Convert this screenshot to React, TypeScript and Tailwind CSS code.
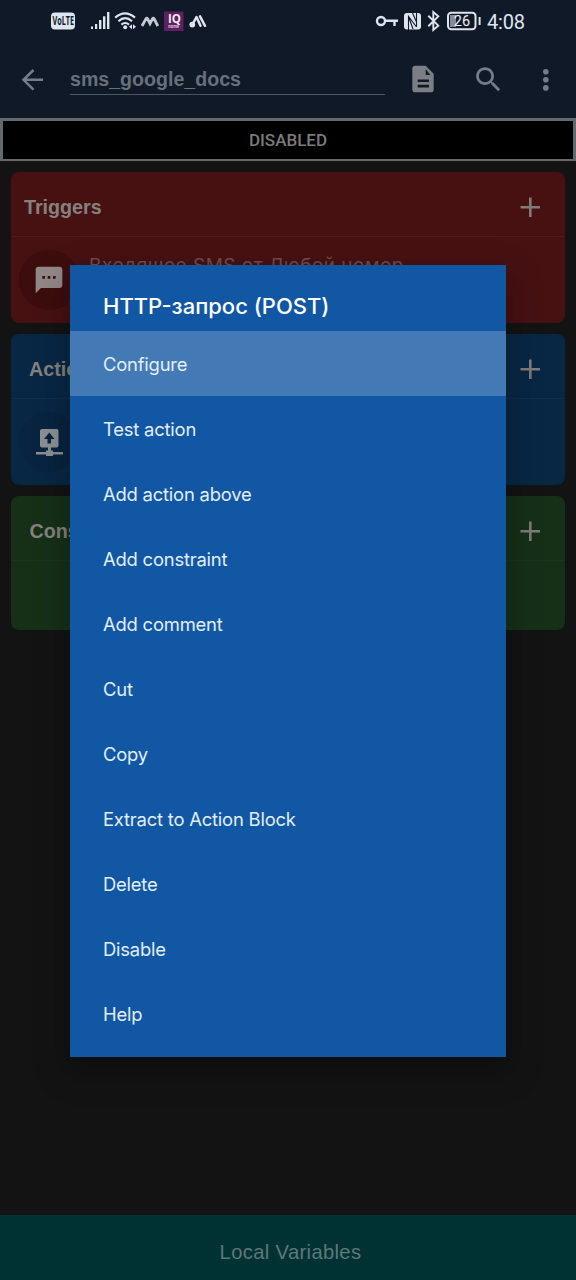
import React from "react";

const LATIN = "font-['Liberation_Sans',Arial,sans-serif]";
const MENU = "font-['Inter',sans-serif]";

function StatusBar() {
  return (
    <div className="flex h-[44px] shrink-0 items-start pt-[9px]">
      <svg className="ml-[48px] h-6 w-[172px] shrink-0" viewBox="48 9 172 24" fill="#dfe5ee">
        <rect x="51" y="12.5" width="24" height="17" rx="4" />
        <text x="52.5" y="25.3" fontFamily="Open Sans, sans-serif" fontSize="12" fontWeight="700" fill="#101928" textLength="21.5" lengthAdjust="spacingAndGlyphs">VoLTE</text>
        <rect x="91" y="26.5" width="2" height="2.5" />
        <rect x="95" y="24" width="2.2" height="5" />
        <rect x="99" y="20" width="2.4" height="9" />
        <rect x="103" y="16.300" width="2.4" height="12.700" />
        <rect x="107" y="12" width="2.4" height="17" />
        <g fill="none" stroke="#dfe5ee" strokeWidth="2.1" strokeLinecap="butt">
          <path d="M115.2 17.6q9.8-8.6 19.8 0" />
          <path d="M118.4 21.2q6.8-6 13.6 0" />
          <path d="M121.4 24.6q3.8-3.2 7.6 0" />
        </g>
        <circle cx="125.2" cy="27.2" r="2" />
        <path d="M132 24.2v5l-3-2.5zM133 24.2v5l3-2.5z" />
        <path d="M142 26l4-7.2q.8-1.2 1.6 0l2.4 4.8 2.5-4.8q.8-1.2 1.6 0l3.7 7.2" fill="none" stroke="#c3c8d1" strokeWidth="2.8" />
        <rect x="164" y="11.5" width="19.5" height="19.5" fill="#5d2160" />
        <text x="168" y="22.800" fontFamily="Open Sans, sans-serif" fontSize="11.500" fontWeight="700" fill="#f3e8f2">IQ</text>
        <text x="168.2" y="28.2" fontFamily="Inter, sans-serif" fontSize="4" fontWeight="700" fill="#e2c8df" textLength="11">home</text>
        <circle cx="192.3" cy="24.6" r="2.9" />
        <path d="M193.500 22.500l3-5.500 4 8.800M200 16.300l5 9.500" fill="none" stroke="#dfe5ee" strokeWidth="2.500" strokeLinejoin="round" strokeLinecap="round" />
      </svg>
      <svg className="ml-[154px] h-6 w-[110px] shrink-0" viewBox="374 9 110 24" fill="none" stroke="#dfe5ee">
        <circle cx="381" cy="21" r="4" strokeWidth="2.4" />
        <path d="M385 20.800h13M394.500 21v5" strokeWidth="2.4" />
        <rect x="404" y="13" width="17" height="16.500" rx="3" fill="#dfe5ee" stroke="none" />
        <path d="M408.500 30V16.500l8 10.500M416.500 12.500v14M408.500 16.500l4.500 12.500M412.500 13l4 9" stroke="#101928" strokeWidth="1.100" />
        <path d="M428.3 15.8l10 9.8-5 4.400V12l5 4.400-10 9.8" strokeWidth="1.900" />
        <rect x="448" y="12.8" width="27.5" height="16.4" rx="3.2" strokeWidth="2" />
        <rect x="450" y="15" width="6" height="12" fill="#858b96" stroke="none" />
        <path d="M479.6 17v8" strokeWidth="2" />
        <text x="453.8" y="26.200" fontFamily="Roboto, sans-serif" fontSize="14.500" fill="#edf1f7" stroke="none">26</text>
      </svg>
      <span className="ml-[3px] mt-px font-['Roboto',sans-serif] text-[20px] leading-6 tracking-[-0.2px] text-[#dfe5ee]">4:08</span>
    </div>
  );
}

function Toolbar() {
  return (
    <div className="flex h-[74px] shrink-0 items-start">
      <svg className="ml-[20px] mt-[24px] size-6" viewBox="0 0 24 24" fill="none" stroke="#777d87" strokeWidth="2.5">
        <path d="M23 11.800H3.600M13.500 2L3.500 11.800l10 9.900" />
      </svg>
      <div className={`${LATIN} ml-[26px] mt-[20px] h-[31px] w-[315px] border-b border-[#4c5562] text-[19.6px] leading-[30px] font-bold text-[#68707b]`}>
        sms_google_docs
      </div>
      <svg className="ml-[22px] mt-[19px] size-8" viewBox="0 0 24 24" fill="#7b7f84">
        <path fillRule="evenodd" d="M14 2H6c-1.100 0-2 .9-2 2v16c0 1.100.9 2 2 2h12c1.100 0 2-.9 2-2V8zM17.500 9H14V4.500zM8 12.300h8.500v2H8zm0 4h8.500v2H8z" />
      </svg>
      <svg className="ml-[33px] mt-[19px] size-[33px]" viewBox="0 0 24 24" fill="#777d87">
        <path d="M15.500 14h-.79l-.28-.27C15.410 12.590 16 11.110 16 9.500 16 5.910 13.090 3 9.500 3S3 5.910 3 9.500 5.910 16 9.500 16c1.610 0 3.090-.59 4.230-1.570l.27.28v.79l5 4.990L20.490 19zm-6 0C7.010 14 5 11.990 5 9.500S7.010 5 9.500 5 14 7.010 14 9.500 11.990 14 9.500 14z" />
      </svg>
      <svg className="ml-[24px] mt-[19px] size-8" viewBox="0 0 32 32" fill="#777d87">
        <circle cx="16.800" cy="8.800" r="2.800" /><circle cx="16.800" cy="16.800" r="2.800" /><circle cx="16.800" cy="24.900" r="2.800" />
      </svg>
    </div>
  );
}

function Plus() {
  return (
    <svg className="size-5" viewBox="0 0 20 20" stroke="#7f7b7b" strokeWidth="2.600">
      <path d="M10.300 .5v19.500M.5 10.300h19.500" />
    </svg>
  );
}

function Card({ title, box, line, head, children }: { title: string; box: string; line: string; head: string; children?: React.ReactNode }) {
  return (
    <section className={`flex shrink-0 flex-col rounded-[8px] ${box}`}>
      <header className={`flex h-[65px] items-center justify-between border-b pt-[6px] pr-[25px] ${line} ${head}`}>
        <h2 className={`${LATIN} text-[19.700px] leading-6 font-bold text-[#85817f]`}>{title}</h2>
        <Plus />
      </header>
      {children}
    </section>
  );
}

const actions = [
  "Configure", "Test action", "Add action above", "Add constraint", "Add comment",
  "Cut", "Copy", "Extract to Action Block", "Delete", "Disable", "Help",
];

function ActionDialog() {
  return (
    <div className={`${MENU} absolute top-[265px] left-[70px] flex h-[792px] w-[436px] flex-col bg-[#1257a4] shadow-[0_12px_30px_4px_rgba(0,0,0,0.250)]`}>
      <h1 className="flex h-[66px] shrink-0 items-center pt-[16px] pl-[33px] text-[22px] leading-7 font-medium text-white">HTTP-запрос (POST)</h1>
      <ul>
        {actions.map((label, i) => (
          <li key={label} className={`flex h-[65px] items-center pt-[3px] pl-[33px] text-[18.400px] tracking-[-0.200px] text-[#e1eefb] ${i === 0 ? "bg-[#437ab6]" : ""}`}>{label}</li>
        ))}
      </ul>
    </div>
  );
}

export default function App() {
  return (
    <div className="relative flex h-[1280px] w-[576px] flex-col overflow-hidden bg-[#131313]">
      <div className="flex shrink-0 flex-col bg-[#101928]">
        <StatusBar />
        <Toolbar />
      </div>
      <div className="flex h-[43px] shrink-0 items-center justify-center border-[3px] border-b-2 border-[#66696b] bg-black pt-[2px] font-['Roboto',sans-serif] text-[17px] font-medium text-[#7b7b7b]">DISABLED</div>
      <main className="flex grow flex-col gap-[11px] px-[11px] pt-[11px]">
        <Card title="Triggers" box="h-[151px] bg-[#471112]" line="border-[#501a1b]" head="pl-[13px]">
          <div className="flex items-start">
            <div className="mt-[13px] ml-[8px] flex size-[60px] shrink-0 items-center justify-center rounded-full bg-[#3d0d0d]">
              <svg className="size-[32px]" viewBox="0 0 24 24" fill="#908988">
                <path fillRule="evenodd" d="M20 2H4c-1.100 0-1.990.9-1.990 2L2 22l4-4h14c1.100 0 2-.9 2-2V4c0-1.100-.9-2-2-2zM9 11H7V9h2v2zm4 0h-2V9h2v2zm4 0h-2V9h2v2z" />
              </svg>
            </div>
            <p className={`${MENU} mt-[15px] ml-[10px] text-[19px] leading-7 tracking-[0.500px] whitespace-nowrap text-[#754a4a]`}>Входящее SMS от Любой номер</p>
          </div>
        </Card>
        <Card title="Actions" box="h-[151px] bg-[#082744]" line="border-[#0f2e4b]" head="pl-[18px]">
          <div className="mt-[13px] ml-[8px] flex size-[60px] items-center justify-center rounded-full bg-[#082440]">
            <svg className="size-[28px]" viewBox="0 0 28 28" fill="#8c9094">
              <path fillRule="evenodd" d="M7 1h14.500a2 2 0 0 1 2 2v14.500a2 2 0 0 1-2 2H16v3h2V24h10v2.500H18V28h-7v-1.500H1V24h10v-1.500h2v-3H7a2 2 0 0 1-2-2V3a2 2 0 0 1 2-2zM14.300 4.500L9 11h3.500v4.500H16V11h3.500z" />
            </svg>
          </div>
        </Card>
        <Card title="Constraints" box="h-[134px] bg-[#163018]" line="border-[#1a351d]" head="pl-[18.500px]" />
      </main>
      <footer className={`${LATIN} flex h-[65px] shrink-0 items-center justify-center bg-[#003234] pt-[10px] pl-[5px] text-[20.200px] tracking-[0.350px] text-[#5d7879]`}>Local Variables</footer>
      <ActionDialog />
    </div>
  );
}
